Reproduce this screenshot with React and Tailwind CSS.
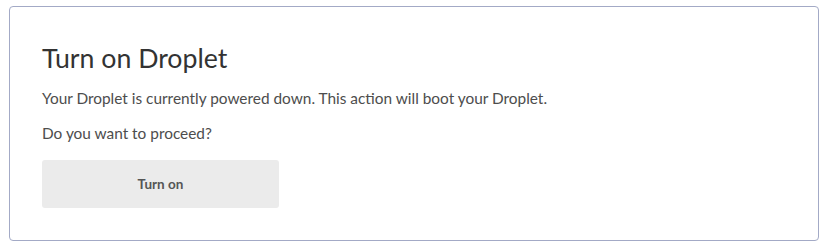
import React from 'react';

const App = () => {
  return (
    <div className="w-[825px] h-[250px] bg-white pt-[6px] pl-[9px] font-['Lato',sans-serif]">
      <div className="w-[810px] h-[235px] border border-[#a3aac6] rounded-[4px] pl-[32px] pt-[35px]">
        <h1 className="text-[26.7px] leading-[32px] text-[#333333]">Turn on Droplet</h1>
        <p className="mt-[14px] text-[15.4px] leading-[20px] text-[#4d4d4d]">
          Your Droplet is currently powered down. This action will boot your Droplet.
        </p>
        <p className="mt-[15px] text-[15.4px] leading-[20px] text-[#4d4d4d]">Do you want to proceed?</p>
        <button className="mt-[17px] w-[237px] h-[48px] bg-[#ebebeb] rounded-[3px] text-[13.5px] font-bold text-[#555555]">
          Turn on
        </button>
      </div>
    </div>
  );
};

export default App;
